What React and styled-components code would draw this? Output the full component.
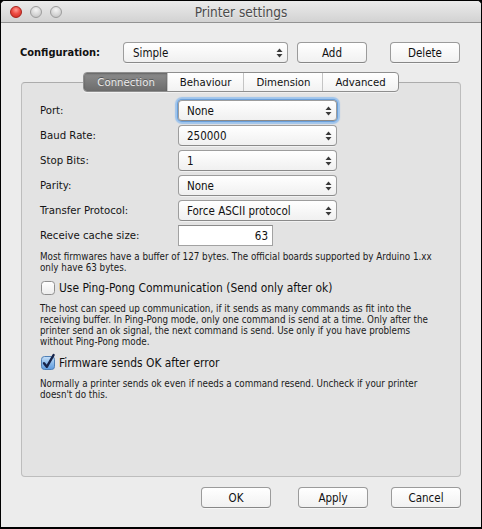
import React from "react";
import styled, { createGlobalStyle, css } from "styled-components";

const Global = createGlobalStyle`
  html, body { margin: 0; padding: 0; background: #000; }
  body {
    font-family: "DejaVu Sans Condensed", "DejaVu Sans", sans-serif;
    font-stretch: condensed;
    color: #111;
  }
  #root { width: 482px; height: 529px; }
`;

const Window = styled.div`
  box-sizing: border-box;
  width: 482px;
  height: 529px;
  border: 1px solid #000;
  border-bottom-width: 2px;
  border-radius: 5px 5px 0 0;
  background: #ececec;
  display: flex;
  flex-direction: column;
  overflow: hidden;
`;

const TitleBar = styled.div`
  box-sizing: border-box;
  height: 22px;
  padding-top: 1px;
  border-bottom: 1px solid #929292;
  border-radius: 4px 4px 0 0;
  background: linear-gradient(#ebebeb, #d2d2d2);
  display: grid;
  grid-template-columns: 1fr auto 1fr;
  align-items: center;
`;

const Lights = styled.div`
  display: flex;
  gap: 8px;
  padding-left: 9px;
`;

const Light = styled.span`
  box-sizing: border-box;
  width: 12px;
  height: 12px;
  border-radius: 50%;
  ${(p) =>
    p.$red
      ? css`
          border: 1px solid #a8211a;
          background: radial-gradient(circle at 50% 30%, #ff9a93 0%, #ee4d44 45%, #c8281f 100%);
        `
      : css`
          border: 1px solid #9c9c9c;
          background: radial-gradient(circle at 50% 30%, #f4f4f4 0%, #d9d9d9 50%, #bdbdbd 100%);
        `}
`;

const Title = styled.div`
  font-size: 13.5px;
  color: #4a4a4a;
  text-shadow: 0 1px 0 rgba(255, 255, 255, 0.55);
`;

const Body = styled.div`
  flex: 1;
  display: flex;
  flex-direction: column;
  padding: 19px 20px 19px 20px;
`;

const ConfigRow = styled.div`
  display: flex;
  align-items: center;
  height: 21px;
`;

const ConfigLabel = styled.div`
  width: 103px;
  margin-left: -1px;
  font-weight: bold;
  font-size: 11px;
  color: #111;
`;

const SelectBox = styled.div`
  box-sizing: border-box;
  width: ${(p) => p.$w}px;
  height: 21px;
  border: 1px solid #9d9d9d;
  border-bottom-color: #8a8a8a;
  border-radius: 4px;
  background: linear-gradient(#ffffff, #f0f0f0);
  box-shadow: ${(p) =>
    p.$focus
      ? "0 0 0 1px #6a9fd9, 0 0 1px 3px #9ec4ec"
      : "0 1px 0 rgba(255,255,255,0.5)"};
  display: flex;
  align-items: center;
  justify-content: space-between;
  padding: 0 4px 0 ${(p) => p.$pl || 8}px;
  font-size: 11.5px;
  color: #111;
`;

const Arrows = () => (
  <svg width="7" height="10" viewBox="0 0 7 10">
    <polygon points="0.5,4 3.5,0.5 6.5,4" fill="#3a3a3a" />
    <polygon points="0.5,6 3.5,9.5 6.5,6" fill="#3a3a3a" />
  </svg>
);

const Select = ({ value, w, focus, pl }) => (
  <SelectBox $w={w} $focus={focus} $pl={pl}>
    <span>{value}</span>
    <Arrows />
  </SelectBox>
);

const Button = styled.div`
  box-sizing: border-box;
  width: 70px;
  height: 21px;
  margin-left: ${(p) => p.$ml || 0}px;
  border: 1px solid #9b9b9b;
  border-bottom-color: #878787;
  border-radius: 4px;
  background: linear-gradient(#ffffff, #f1f1f1);
  box-shadow: 0 1px 0 rgba(255, 255, 255, 0.5);
  display: flex;
  align-items: center;
  justify-content: center;
  font-size: 11.5px;
  color: #111;
`;

const TabBar = styled.div`
  display: flex;
  justify-content: center;
  margin-top: 9px;
  position: relative;
  z-index: 1;
`;

const TabGroup = styled.div`
  box-sizing: border-box;
  display: flex;
  height: 20px;
  border: 1px solid #8e8e8e;
  border-radius: 4px;
  overflow: hidden;
  background: linear-gradient(#ffffff, #f2f2f2);
  box-shadow: 0 1px 0 rgba(255, 255, 255, 0.5);
`;

const Tab = styled.div`
  display: flex;
  align-items: center;
  padding: 0 12px;
  font-size: 11.3px;
  color: #111;
  & + & {
    border-left: 1px solid #c4c4c4;
  }
  ${(p) =>
    p.$active &&
    css`
      padding: 0 12px 0 13px;
      background: linear-gradient(#8c8c8c, #6c6c6c);
      color: #ececec;
      text-shadow: 0 -1px 0 rgba(0, 0, 0, 0.35);
      box-shadow: inset 0 1px 2px rgba(0, 0, 0, 0.3);
    `}
`;

const Panel = styled.div`
  flex: 1;
  margin-top: -10px;
  border: 1px solid #bdbdbd;
  border-top-color: #acacac;
  border-radius: 4px;
  background: #e3e3e3;
  padding: 17px 18px 0 18px;
  display: flex;
  flex-direction: column;
`;

const FormGrid = styled.div`
  display: grid;
  grid-template-columns: 138px auto;
  grid-auto-rows: 21px;
  row-gap: 4px;
  align-items: center;
`;

const Label = styled.div`
  font-size: 11.3px;
  color: #151515;
`;

const NumberInput = styled.div`
  box-sizing: border-box;
  width: 95px;
  height: 21px;
  border: 1px solid #a2a2a2;
  border-top-color: #8b8b8b;
  background: #fff;
  display: flex;
  align-items: center;
  justify-content: flex-end;
  padding-right: 4px;
  font-size: 11.5px;
  color: #111;
`;

const Help = styled.div`
  margin-top: ${(p) => p.$mt}px;
  font-size: 9.75px;
  line-height: 10.7px;
  color: #1a1a1a;
  white-space: nowrap;
`;

const CheckRow = styled.div`
  display: flex;
  align-items: center;
  gap: 4px;
  height: 14px;
  margin-top: ${(p) => p.$mt}px;
  padding-left: 1px;
  font-size: 11.9px;
  color: #111;
`;

const CheckBox = ({ checked }) =>
  checked ? (
    <svg width="14" height="14" viewBox="0 0 14 14" style={{ overflow: "visible" }}>
      <defs>
        <linearGradient id="cbBlue" x1="0" y1="0" x2="0" y2="1">
          <stop offset="0" stopColor="#c7e0f8" />
          <stop offset="0.5" stopColor="#8dbbea" />
          <stop offset="1" stopColor="#5d9be0" />
        </linearGradient>
      </defs>
      <rect x="0.5" y="0.5" width="13" height="13" rx="3" fill="url(#cbBlue)" stroke="#4f7fb5" />
      <path d="M3 7.2 L5.8 10.8 L12.6 -1" fill="none" stroke="#17244a" strokeWidth="2.4" strokeLinecap="round" strokeLinejoin="round" />
    </svg>
  ) : (
    <svg width="14" height="14" viewBox="0 0 14 14">
      <defs>
        <linearGradient id="cbWhite" x1="0" y1="0" x2="0" y2="1">
          <stop offset="0" stopColor="#ffffff" />
          <stop offset="1" stopColor="#ececec" />
        </linearGradient>
      </defs>
      <rect x="0.5" y="0.5" width="13" height="13" rx="3" fill="url(#cbWhite)" stroke="#8f8f8f" />
    </svg>
  );

const Footer = styled.div`
  display: flex;
  justify-content: flex-end;
  margin-top: 10px;
`;

const rows = [
  ["Port:", "None", true],
  ["Baud Rate:", "250000"],
  ["Stop Bits:", "1"],
  ["Parity:", "None"],
  ["Transfer Protocol:", "Force ASCII protocol"],
];

export default function App() {
  return (
    <>
      <Global />
      <Window>
        <TitleBar>
          <Lights>
            <Light $red />
            <Light />
            <Light />
          </Lights>
          <Title>Printer settings</Title>
          <div />
        </TitleBar>
        <Body>
          <ConfigRow>
            <ConfigLabel>Configuration:</ConfigLabel>
            <Select value="Simple" w={165} pl={9} />
            <Button $ml={9}>Add</Button>
            <Button $ml={23}>Delete</Button>
          </ConfigRow>
          <TabBar>
            <TabGroup>
              <Tab $active>Connection</Tab>
              <Tab>Behaviour</Tab>
              <Tab>Dimension</Tab>
              <Tab>Advanced</Tab>
            </TabGroup>
          </TabBar>
          <Panel>
            <FormGrid>
              {rows.map(([l, v, f]) => (
                <React.Fragment key={l}>
                  <Label>{l}</Label>
                  <Select value={v} w={159} focus={f} />
                </React.Fragment>
              ))}
              <Label>Receive cache size:</Label>
              <NumberInput>63</NumberInput>
            </FormGrid>
            <Help $mt={6}>
              Most firmwares have a buffer of 127 bytes. The official boards supported by Arduino 1.xx
              <br />
              only have 63 bytes.
            </Help>
            <CheckRow $mt={8}>
              <CheckBox />
              <span>Use Ping-Pong Communication (Send only after ok)</span>
            </CheckRow>
            <Help $mt={9}>
              The host can speed up communication, if it sends as many commands as fit into the
              <br />
              receiving buffer. In Ping-Pong mode, only one command is send at a time. Only after the
              <br />
              printer send an ok signal, the next command is send. Use only if you have problems
              <br />
              without Ping-Pong mode.
            </Help>
            <CheckRow $mt={9}>
              <CheckBox checked />
              <span>Firmware sends OK after error</span>
            </CheckRow>
            <Help $mt={9}>
              Normally a printer sends ok even if needs a command resend. Uncheck if your printer
              <br />
              doesn't do this.
            </Help>
          </Panel>
          <Footer>
            <Button>OK</Button>
            <Button $ml={27}>Apply</Button>
            <Button $ml={23}>Cancel</Button>
          </Footer>
        </Body>
      </Window>
    </>
  );
}
